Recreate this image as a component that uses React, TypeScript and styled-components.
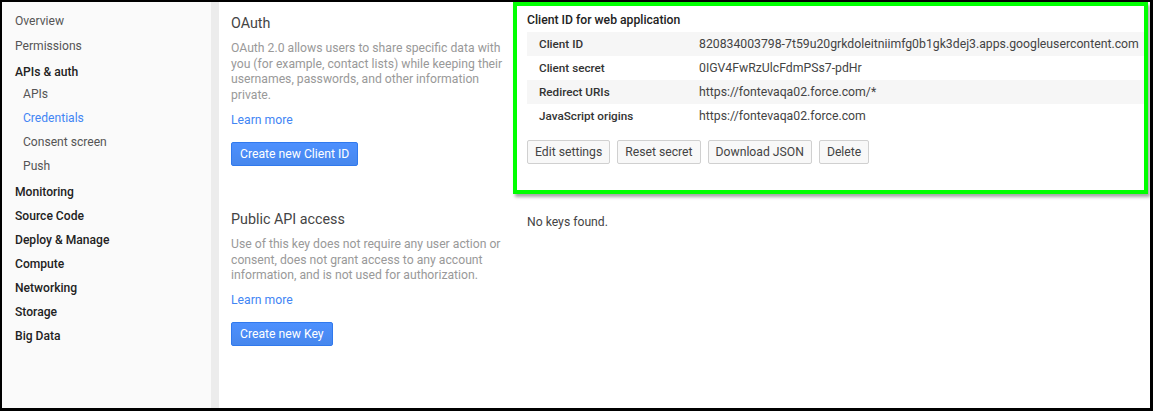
import React from 'react'
import styled, { createGlobalStyle } from 'styled-components'

const GlobalStyle = createGlobalStyle`
  html, body {
    margin: 0;
    padding: 0;
    background: #fff;
  }
  body {
    font-family: Roboto, 'Liberation Sans', Arial, sans-serif;
    font-size: 12.2px;
    color: #444;
  }
  * {
    box-sizing: border-box;
  }
`

const Frame = styled.div`
  width: 1153px;
  height: 411px;
  border-style: solid;
  border-color: #000;
  border-width: 2px 3px 3px 2px;
  display: flex;
  overflow: hidden;
  background: #fff;
`

const Sidebar = styled.nav`
  width: 217px;
  flex-shrink: 0;
  background: #fafafa;
  border-right: 8px solid #ececec;
  padding-top: 7px;
`

const NavItem = styled.div<{ $bold?: boolean; $active?: boolean; $sub?: boolean }>`
  height: 24px;
  line-height: 24px;
  padding-left: ${(props) => (props.$sub ? '21px' : '13px')};
  font-size: 12.1px;
  font-weight: ${(props) => (props.$bold ? 500 : 400)};
  color: ${(props) => (props.$active ? '#4285f4' : props.$bold ? '#222' : '#555')};
  white-space: nowrap;
`

const SubList = styled.div`
  margin: -2px 0 2px;
`

const Gap = styled.div<{ $h: number }>`
  height: ${(props) => props.$h}px;
`

const Main = styled.main`
  flex: 1;
  display: flex;
`

const InfoColumn = styled.section`
  width: 294px;
  flex-shrink: 0;
  padding: 12px 6px 0 12px;
`

const SectionTitle = styled.h2`
  margin: 0;
  font-size: 14.3px;
  font-weight: 400;
  line-height: 18px;
  color: #444;
`

const Description = styled.p`
  margin: 9px 0 0;
  font-size: 12.2px;
  line-height: 15.7px;
  color: #999;
`

const LearnMore = styled.a`
  display: block;
  margin-top: 8px;
  line-height: 16px;
  color: #4285f4;
  text-decoration: none;
  cursor: pointer;
`

const PrimaryButton = styled.button`
  display: block;
  margin-top: 14px;
  height: 24px;
  padding: 0 8px;
  font-family: inherit;
  font-size: 12.2px;
  color: #fff;
  background: linear-gradient(#4d90fe, #4787ed);
  border: 1px solid #3079ed;
  border-radius: 2px;
  cursor: pointer;
`

const DetailsColumn = styled.section`
  flex: 1;
  padding-right: 2px;
`

const HighlightCard = styled.div`
  border: 4px solid #00ff00;
  box-shadow: 2px 3px 3px rgba(0, 0, 0, 0.35);
  padding: 6px 0 26px 10px;
  background: #fff;
`

const CardTitle = styled.h3`
  margin: 0 0 4px;
  font-size: 12.2px;
  font-weight: 500;
  line-height: 16px;
  color: #222;
`

const DetailRow = styled.div<{ $shaded?: boolean }>`
  display: flex;
  height: 24px;
  align-items: center;
  background: ${(props) => (props.$shaded ? '#f6f6f6' : '#fff')};
`

const DetailLabel = styled.div`
  width: 172px;
  padding-left: 12px;
  font-size: 11.7px;
  font-weight: 500;
  color: #333;
`

const DetailValue = styled.div`
  color: #444;
  white-space: nowrap;
  font-size: 12.25px;
`

const ActionBar = styled.div`
  display: flex;
  gap: 7px;
  margin-top: 12px;
`

const ActionButton = styled.button`
  height: 24px;
  padding: 0 7px;
  font-family: inherit;
  font-size: 12.2px;
  color: #444;
  background: #f8f8f8;
  border: 1px solid #d0d0d0;
  border-radius: 2px;
  cursor: pointer;
`

const EmptyNote = styled.p`
  margin: 21px 0 0 14px;
  font-size: 12.2px;
  color: #444;
`

const details = [
  { label: 'Client ID', value: '820834003798-7t59u20grkdoleitniimfg0b1gk3dej3.apps.googleusercontent.com' },
  { label: 'Client secret', value: '0IGV4FwRzUlcFdmPSs7-pdHr' },
  { label: 'Redirect URIs', value: 'https://fontevaqa02.force.com/*' },
  { label: 'JavaScript origins', value: 'https://fontevaqa02.force.com' },
]

const App = () => {
  return (
    <>
      <GlobalStyle />
      <Frame>
        <Sidebar>
          <NavItem>Overview</NavItem>
          <Gap $h={1} />
          <NavItem>Permissions</NavItem>
          <Gap $h={2} />
          <NavItem $bold>APIs &amp; auth</NavItem>
          <SubList>
            <NavItem $sub>APIs</NavItem>
            <NavItem $sub $active>Credentials</NavItem>
            <NavItem $sub>Consent screen</NavItem>
            <NavItem $sub>Push</NavItem>
          </SubList>
          <NavItem $bold>Monitoring</NavItem>
          <NavItem $bold>Source Code</NavItem>
          <NavItem $bold>Deploy &amp; Manage</NavItem>
          <NavItem $bold>Compute</NavItem>
          <NavItem $bold>Networking</NavItem>
          <NavItem $bold>Storage</NavItem>
          <NavItem $bold>Big Data</NavItem>
        </Sidebar>
        <Main>
          <InfoColumn>
            <SectionTitle>OAuth</SectionTitle>
            <Description>
              OAuth 2.0 allows users to share specific data with you (for example, contact lists) while
              keeping their usernames, passwords, and other information private.
            </Description>
            <LearnMore>Learn more</LearnMore>
            <PrimaryButton>Create new Client ID</PrimaryButton>
            <Gap $h={44} />
            <SectionTitle>Public API access</SectionTitle>
            <Description>
              Use of this key does not require any user action or consent, does not grant access to any
              account information, and is not used for authorization.
            </Description>
            <LearnMore>Learn more</LearnMore>
            <PrimaryButton>Create new Key</PrimaryButton>
          </InfoColumn>
          <DetailsColumn>
            <HighlightCard>
              <CardTitle>Client ID for web application</CardTitle>
              {details.map((row, i) => (
                <DetailRow key={row.label} $shaded={i % 2 === 0}>
                  <DetailLabel>{row.label}</DetailLabel>
                  <DetailValue>{row.value}</DetailValue>
                </DetailRow>
              ))}
              <ActionBar>
                <ActionButton>Edit settings</ActionButton>
                <ActionButton>Reset secret</ActionButton>
                <ActionButton>Download JSON</ActionButton>
                <ActionButton>Delete</ActionButton>
              </ActionBar>
            </HighlightCard>
            <EmptyNote>No keys found.</EmptyNote>
          </DetailsColumn>
        </Main>
      </Frame>
    </>
  )
}

export default App
